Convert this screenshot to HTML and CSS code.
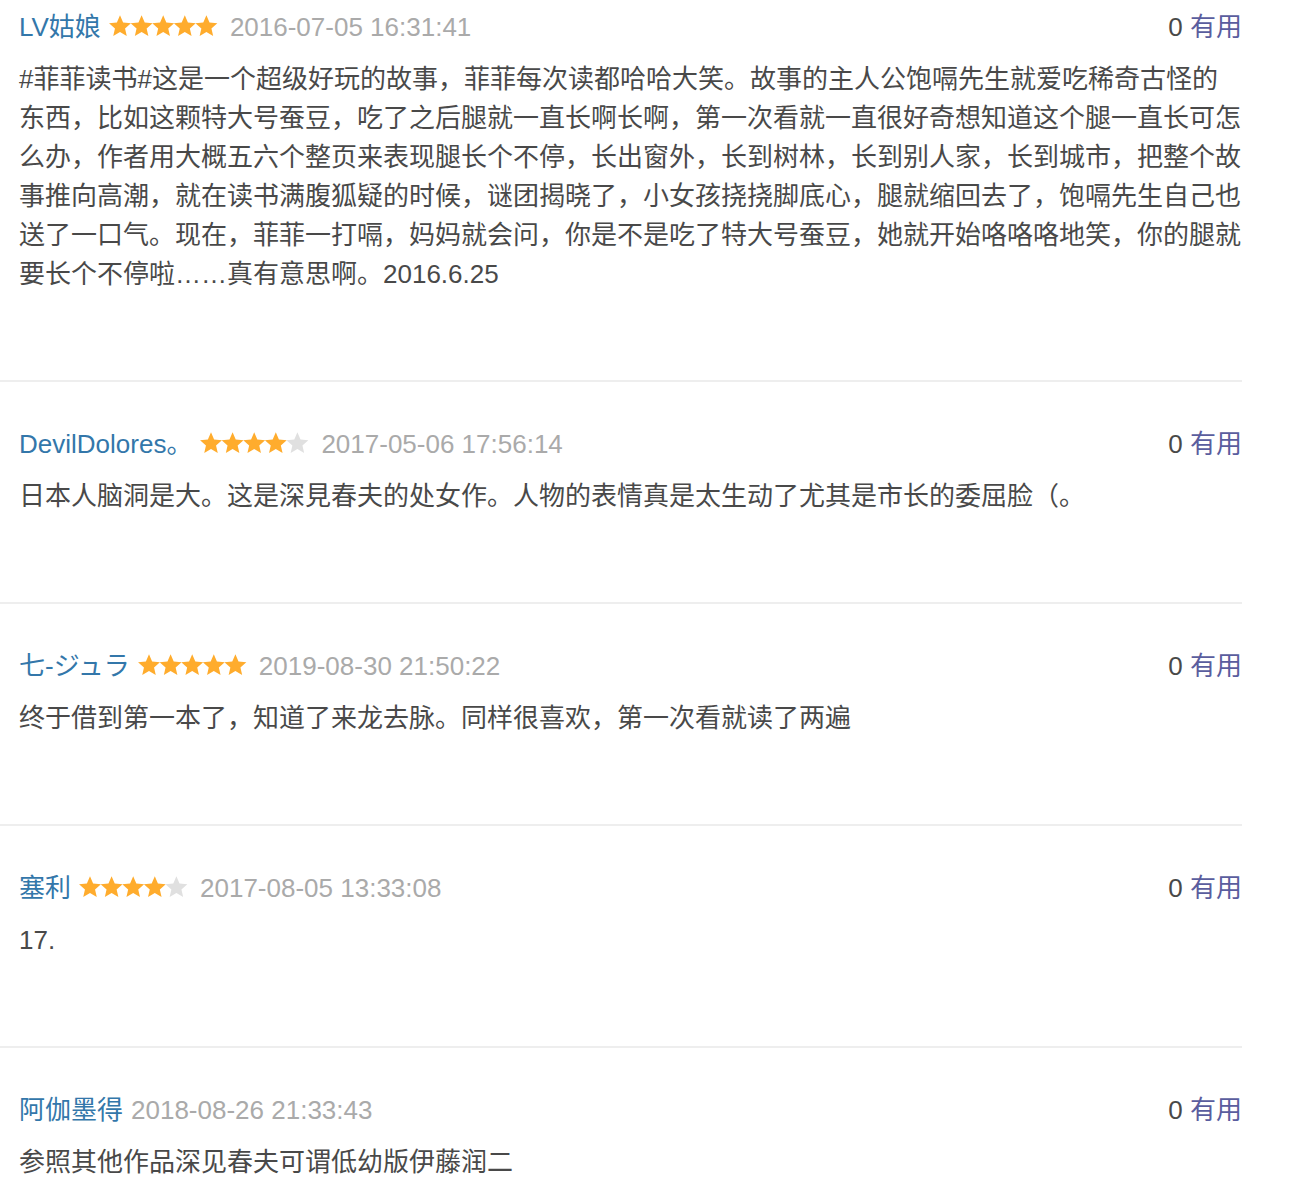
FILE: index.html
```html
<!DOCTYPE html>
<html lang="zh-CN">
<head>
<meta charset="utf-8">
<title>短评</title>
<link rel="stylesheet" href="styles.css">
</head>
<body>
<svg class="defs" width="0" height="0" aria-hidden="true">
  <defs>
    <polygon id="star" points="11,0.3 14.12,7.51 21.94,8.25 16.04,13.44 17.76,21.1 11,17.1 4.24,21.1 5.96,13.44 0.06,8.25 7.88,7.51"/>
  </defs>
</svg>
<div class="list">
  <div class="review first">
    <div class="head">
      <div class="meta">
        <span class="name">LV姑娘</span>
        <svg class="stars" width="113" height="22" viewBox="0 0 113 22"><use href="#star" x="0" class="on"/><use href="#star" x="21.6" class="on"/><use href="#star" x="43.2" class="on"/><use href="#star" x="64.8" class="on"/><use href="#star" x="86.4" class="on"/></svg>
        <span class="date">2016-07-05 16:31:41</span>
      </div>
      <div class="vote"><span class="count">0</span> <span class="useful">有用</span></div>
    </div>
    <p class="text">#菲菲读书#这是一个超级好玩的故事，菲菲每次读都哈哈大笑。故事的主人公饱嗝先生就爱吃稀奇古怪的东西，比如这颗特大号蚕豆，吃了之后腿就一直长啊长啊，第一次看就一直很好奇想知道这个腿一直长可怎么办，作者用大概五六个整页来表现腿长个不停，长出窗外，长到树林，长到别人家，长到城市，把整个故事推向高潮，就在读书满腹狐疑的时候，谜团揭晓了，小女孩挠挠脚底心，腿就缩回去了，饱嗝先生自己也送了一口气。现在，菲菲一打嗝，妈妈就会问，你是不是吃了特大号蚕豆，她就开始咯咯咯地笑，你的腿就要长个不停啦……真有意思啊。2016.6.25</p>
  </div>
  <div class="review">
    <div class="head">
      <div class="meta">
        <span class="name">DevilDolores。</span>
        <svg class="stars" width="113" height="22" viewBox="0 0 113 22"><use href="#star" x="0" class="on"/><use href="#star" x="21.6" class="on"/><use href="#star" x="43.2" class="on"/><use href="#star" x="64.8" class="on"/><use href="#star" x="86.4" class="off"/></svg>
        <span class="date">2017-05-06 17:56:14</span>
      </div>
      <div class="vote"><span class="count">0</span> <span class="useful">有用</span></div>
    </div>
    <p class="text">日本人脑洞是大。这是深見春夫的处女作。人物的表情真是太生动了尤其是市长的委屈脸（。</p>
  </div>
  <div class="review">
    <div class="head">
      <div class="meta">
        <span class="name">七-ジュラ</span>
        <svg class="stars" width="113" height="22" viewBox="0 0 113 22"><use href="#star" x="0" class="on"/><use href="#star" x="21.6" class="on"/><use href="#star" x="43.2" class="on"/><use href="#star" x="64.8" class="on"/><use href="#star" x="86.4" class="on"/></svg>
        <span class="date">2019-08-30 21:50:22</span>
      </div>
      <div class="vote"><span class="count">0</span> <span class="useful">有用</span></div>
    </div>
    <p class="text">终于借到第一本了，知道了来龙去脉。同样很喜欢，第一次看就读了两遍</p>
  </div>
  <div class="review">
    <div class="head">
      <div class="meta">
        <span class="name">塞利</span>
        <svg class="stars" width="113" height="22" viewBox="0 0 113 22"><use href="#star" x="0" class="on"/><use href="#star" x="21.6" class="on"/><use href="#star" x="43.2" class="on"/><use href="#star" x="64.8" class="on"/><use href="#star" x="86.4" class="off"/></svg>
        <span class="date">2017-08-05 13:33:08</span>
      </div>
      <div class="vote"><span class="count">0</span> <span class="useful">有用</span></div>
    </div>
    <p class="text">17.</p>
  </div>
  <div class="review">
    <div class="head">
      <div class="meta">
        <span class="name">阿伽墨得</span>
        <span class="date">2018-08-26 21:33:43</span>
      </div>
      <div class="vote"><span class="count">0</span> <span class="useful">有用</span></div>
    </div>
    <p class="text">参照其他作品深见春夫可谓低幼版伊藤润二</p>
  </div>
</div>
</body>
</html>
```
FILE: styles.css
```css
html, body {
  margin: 0;
  padding: 0;
  background: #fff;
}
body {
  font-family: "Liberation Sans", "Noto Sans CJK SC", sans-serif;
  font-size: 26px;
  color: #494949;
}
.defs {
  position: absolute;
  width: 0;
  height: 0;
  overflow: hidden;
}
.list {
  width: 1242px;
}
.review {
  padding: 43px 0 86px 19px;
  border-bottom: 2px solid #eeeeee;
}
.review.first {
  padding-top: 8px;
}
.head {
  display: flex;
  justify-content: space-between;
  align-items: center;
  height: 39px;
  line-height: 39px;
}
.meta {
  display: flex;
  align-items: center;
  gap: 8px;
  white-space: nowrap;
}
.name {
  color: #3377aa;
}
.stars {
  display: block;
  margin-top: -3px;
}
.stars .on {
  fill: #ffac2d;
}
.stars .off {
  fill: #e0e0e0;
}
.date {
  color: #aaaaaa;
}
.vote {
  white-space: nowrap;
}
.count {
  color: #494949;
}
.useful {
  color: #5a5d9e;
}
.text {
  margin: 13px 0 0;
  line-height: 39px;
  color: #494949;
}
```
